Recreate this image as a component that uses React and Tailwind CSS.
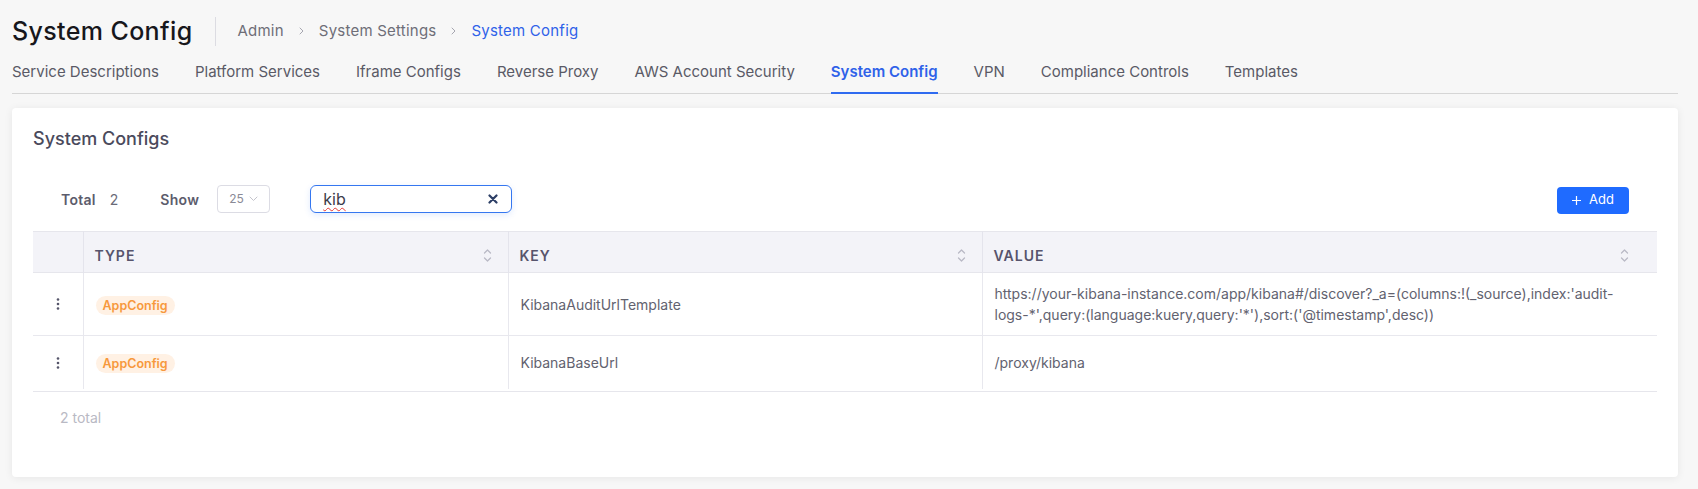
import React from "react";

const tabs = [
  "Service Descriptions",
  "Platform Services",
  "Iframe Configs",
  "Reverse Proxy",
  "AWS Account Security",
  "System Config",
  "VPN",
  "Compliance Controls",
  "Templates",
];

const rows = [
  {
    type: "AppConfig",
    key: "KibanaAuditUrlTemplate",
    value:
      "https://your-kibana-instance.com/app/kibana#/discover?_a=(columns:!(_source),index:'audit-logs-*',query:(language:kuery,query:'*'),sort:('@timestamp',desc))",
  },
  { type: "AppConfig", key: "KibanaBaseUrl", value: "/proxy/kibana" },
];

function SortIcon() {
  return (
    <svg width="9" height="15" viewBox="0 0 9 15" fill="none" stroke="#b9b9c6" strokeWidth="1.3" strokeLinecap="round" strokeLinejoin="round">
      <path d="M1.5 5 L4.5 2 L7.5 5" />
      <path d="M1.5 10 L4.5 13 L7.5 10" />
    </svg>
  );
}

function Chevron() {
  return (
    <svg width="9" height="6" viewBox="0 0 9 6" fill="none" stroke="#c4c4cc" strokeWidth="1" strokeLinecap="round">
      <path d="M1 1 L4.5 4.5 L8 1" />
    </svg>
  );
}

function Crumb() {
  return (
    <svg className="mx-[15px]" width="5" height="8" viewBox="0 0 5 8" fill="none" stroke="#a6a6b0" strokeWidth="1" strokeLinecap="round">
      <path d="M1 1 L4 4 L1 7" />
    </svg>
  );
}

function Kebab() {
  return (
    <svg width="4" height="12" viewBox="0 0 4 12" fill="#55556a">
      <circle cx="2" cy="1.5" r="1.3" />
      <circle cx="2" cy="6" r="1.3" />
      <circle cx="2" cy="10.5" r="1.3" />
    </svg>
  );
}

export default function App() {
  return (
    <div className="min-h-screen bg-[#f7f7f7] pl-3 pr-5 font-['Inter',sans-serif]">
      {/* HEADER */}
      <div className="box-content flex h-[34px] items-center pt-[14px]">
        <h1 className="text-[25px] font-medium leading-8 tracking-[0.015em] text-[#17171c]">System Config</h1>
        <div className="ml-[22px] h-[29px] w-px bg-[#dcdce2]" />
        <div className="ml-[22px] flex items-center text-[15px] tracking-[0.015em] text-[#6e6e78]">
          <span>Admin</span>
          <Crumb />
          <span>System Settings</span>
          <Crumb />
          <span className="text-[#2f62e9]">System Config</span>
        </div>
      </div>

      {/* TABS */}
      <div className="mt-[13px] flex gap-9 border-b border-[#d6d6d6]">
        {tabs.map((t) => (
          <div
            key={t}
            className={
              t === "System Config"
                ? "-mb-px border-b-2 border-[#2f6bf0] pb-[9px] text-[15px] font-semibold leading-[22px] text-[#2f62e9]"
                : "-mb-px border-b-2 border-transparent pb-[9px] text-[15px] leading-[22px] text-[#5a5a66]"
            }
          >
            {t}
          </div>
        ))}
      </div>

      {/* CARD */}
      <div className="mt-[14px] rounded bg-white px-[21px] pb-[49px] pt-[17px] shadow-[0_1px_8px_rgba(0,0,0,0.07)]">
        <h2 className="text-[18px] font-medium leading-7 text-[#4a4a5c]">System Configs</h2>

        <div className="mt-[32px] flex h-[28px] items-center px-[28px] text-[14px]">
          <span className="font-semibold tracking-[0.02em] text-[#5c5c6c]">Total</span>
          <span className="ml-[14px] text-[#6a6a78]">2</span>
          <span className="ml-[42px] font-semibold tracking-[0.02em] text-[#5c5c6c]">Show</span>
          <div className="ml-[18px] flex h-[28px] w-[53px] items-center justify-between rounded border border-[#dcdce4] pl-[11px] pr-[11px]">
            <span className="text-[12px] text-[#8a8a96]">25</span>
            <Chevron />
          </div>
          <div className="ml-[40px] flex h-[28px] w-[202px] items-center justify-between rounded-md border border-[#3577f0] pl-[12px] pr-[13px] shadow-[0_2px_6px_rgba(53,119,240,0.15)]">
            <span className="text-[16px] text-[#3c3c4a] underline decoration-wavy decoration-[#e53935] decoration-1 underline-offset-2">
              kib
            </span>
            <svg width="10" height="10" viewBox="0 0 10 10" stroke="#2d3f66" strokeWidth="2.2" strokeLinecap="round">
              <path d="M1.5 1.5 L8.5 8.5 M8.5 1.5 L1.5 8.5" />
            </svg>
          </div>
          <button className="ml-auto flex h-[27px] w-[72px] translate-y-[1px] items-center justify-center gap-[8px] rounded bg-[#1f6bff] text-[13px] text-white">
            <svg width="9" height="9" viewBox="0 0 9 9" stroke="#fff" strokeWidth="1.2">
              <path d="M4.5 0 V9 M0 4.5 H9" />
            </svg>
            Add
          </button>
        </div>

        {/* TABLE */}
        <div className="mt-[18px] border-b border-[#e6e6ec] pb-[2px]">
          <table className="w-full table-fixed border-collapse text-[14px]">
            <colgroup>
              <col className="w-[50px]" />
              <col className="w-[425px]" />
              <col className="w-[474px]" />
              <col />
            </colgroup>
            <thead>
              <tr className="h-[41px] border-y border-[#e6e6ec] bg-[#f3f3f8] text-left text-[14px] font-semibold uppercase tracking-[0.07em] text-[#57546c]">
                <th className="border-r border-[#e4e4ec]" />
                {["Type", "Key", "Value"].map((h, i) => (
                  <th
                    key={h}
                    className={
                      i < 2
                        ? "border-r border-[#e4e4ec] pl-[11px] pr-[16px] pt-[6px] font-semibold"
                        : "pl-[11px] pr-[28px] pt-[6px] font-semibold"
                    }
                  >
                    <div className="flex items-center justify-between">
                      <span>{h}</span>
                      <SortIcon />
                    </div>
                  </th>
                ))}
              </tr>
            </thead>
            <tbody className="text-[#62626f]">
              {rows.map((r, idx) => (
                <tr key={r.key} className={idx < rows.length - 1 ? "border-b border-[#e8e8ee]" : ""}>
                  <td className="border-r border-[#e8e8ee] py-[10px]">
                    <div className="flex h-[33px] items-center justify-center">
                      <Kebab />
                    </div>
                  </td>
                  <td className="border-r border-[#e8e8ee] px-[12px] py-[10px]">
                    <span className="inline-block rounded-full bg-[#fff1e4] px-[7px] text-[12.5px] font-semibold leading-[19px] text-[#f7993d]">
                      {r.type}
                    </span>
                  </td>
                  <td className="border-r border-[#e8e8ee] px-[12px] py-[10px]">{r.key}</td>
                  <td className="px-[12px] py-[10px] leading-[21px]">{r.value}</td>
                </tr>
              ))}
            </tbody>
          </table>
        </div>

        <div className="mt-[16px] pl-[27px] text-[14px] leading-5 text-[#b9b9c4]">2 total</div>
      </div>
    </div>
  );
}
